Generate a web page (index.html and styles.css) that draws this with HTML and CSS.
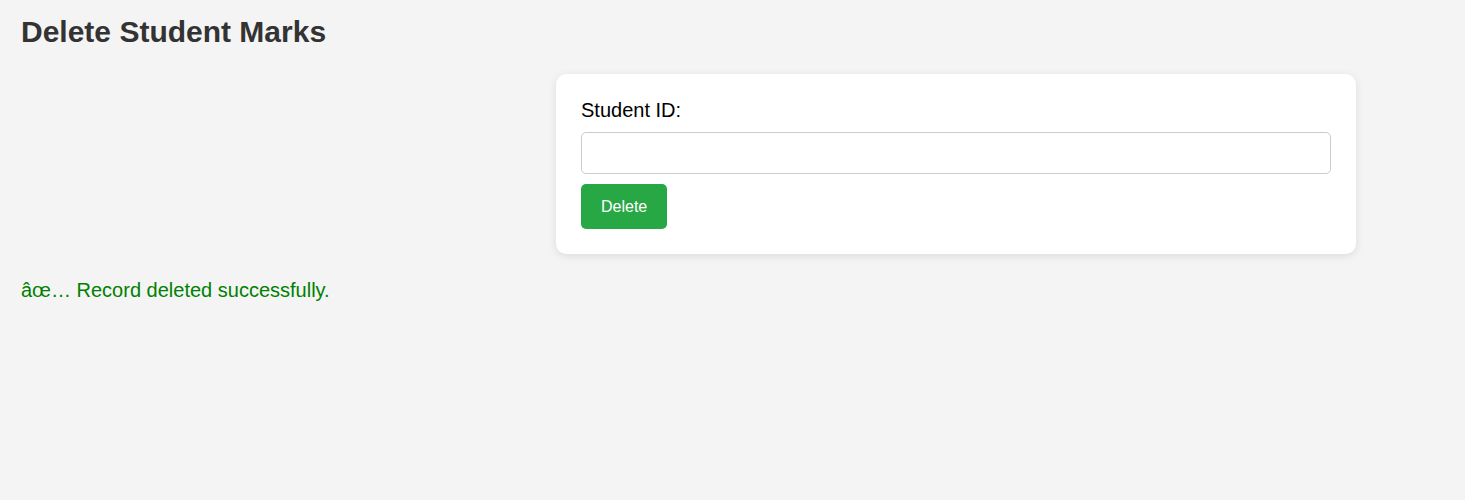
FILE: index.html
```html
<!DOCTYPE html>
<html lang="en">
<head>
<meta charset="utf-8">
<title>Delete Student Marks</title>
<link rel="stylesheet" href="styles.css">
</head>
<body>
<h2 class="title">Delete Student Marks</h2>
<form class="card">
  <label class="label" for="sid">Student ID:</label>
  <input class="field" id="sid" type="text">
  <button class="btn" type="button">Delete</button>
</form>
<p class="msg">âœ… Record deleted successfully.</p>
</body>
</html>
```
FILE: styles.css
```css
html, body {
  margin: 0;
  background: #f4f4f4;
}
body {
  padding: 15px 21px;
  font-family: "Liberation Sans", Arial, sans-serif;
  font-size: 20px;
  color: #000;
}
.title {
  margin: 0;
  font-size: 30px;
  font-weight: bold;
  color: #333;
  line-height: 34.5px;
}
.card {
  box-sizing: border-box;
  width: 800px;
  margin: 24.5px 0 0 535px;
  padding: 25px;
  background: #fff;
  border-radius: 10px;
  box-shadow: 0 2px 8px rgba(0, 0, 0, 0.1);
  display: flex;
  flex-direction: column;
  align-items: flex-start;
}
.label {
  display: block;
  line-height: 23px;
  margin-bottom: 10px;
}
.field {
  box-sizing: border-box;
  width: 100%;
  height: 42px;
  margin: 0 0 10px;
  padding: 10px;
  border: 1px solid #ccc;
  border-radius: 5px;
  font-family: "Liberation Sans", Arial, sans-serif;
  font-size: 18px;
  background: #fff;
}
.btn {
  height: 45px;
  padding: 0 20px;
  border: none;
  border-radius: 5px;
  background: #28a745;
  color: #fff;
  font-family: "Liberation Sans", Arial, sans-serif;
  font-size: 16px;
}
.msg {
  margin: 25px 0 0;
  color: green;
  line-height: 23px;
}
```
